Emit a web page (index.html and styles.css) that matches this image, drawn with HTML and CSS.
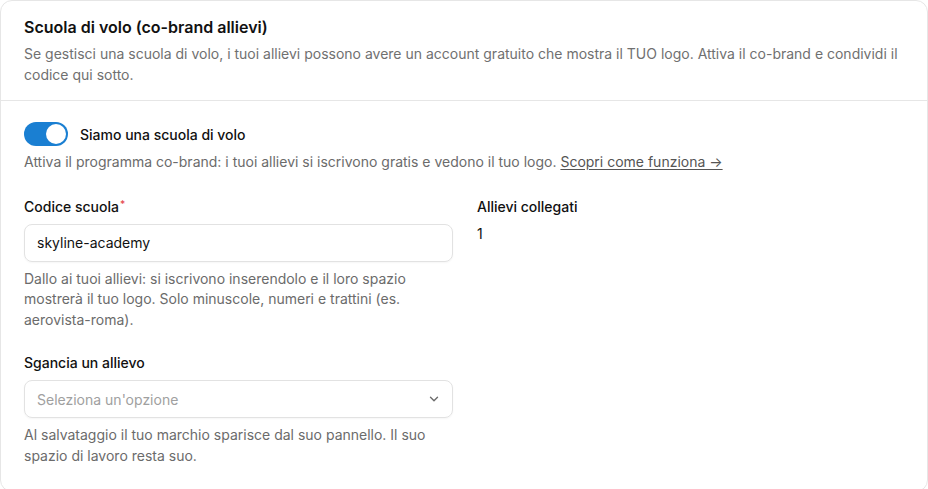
FILE: index.html
```html
<!DOCTYPE html>
<html lang="it">
<head>
<meta charset="utf-8">
<link rel="stylesheet" href="styles.css">
</head>
<body>
<section class="card">
  <header class="card-head">
    <h2 class="title">Scuola di volo (co-brand allievi)</h2>
    <p class="desc">Se gestisci una scuola di volo, i tuoi allievi possono avere un account gratuito che mostra il TUO logo. Attiva il co-brand e condividi il codice qui sotto.</p>
  </header>
  <div class="card-body">
    <div class="toggle-row">
      <span class="switch"><span class="knob"></span></span>
      <span class="toggle-label">Siamo una scuola di volo</span>
    </div>
    <p class="hint toggle-hint">Attiva il programma co-brand: i tuoi allievi si iscrivono gratis e vedono il tuo logo. <a class="link" href="#">Scopri come funziona →</a></p>

    <div class="grid">
      <div class="col">
        <div class="field">
          <label class="label">Codice scuola<span class="req">*</span></label>
          <div class="input">skyline-academy</div>
          <p class="hint">Dallo ai tuoi allievi: si iscrivono inserendolo e il loro spazio mostrerà il tuo logo. Solo minuscole, numeri e trattini (es. aerovista-roma).</p>
        </div>
        <div class="field field-2">
          <label class="label">Sgancia un allievo</label>
          <div class="input select">
            <span class="placeholder">Seleziona un'opzione</span>
            <svg class="chev" width="14" height="14" viewBox="0 0 16 16" fill="none"><path d="M4 6l4 4 4-4" stroke="#6b6b6b" stroke-width="1.6" stroke-linecap="round" stroke-linejoin="round"/></svg>
          </div>
          <p class="hint">Al salvataggio il tuo marchio sparisce dal suo pannello. Il suo spazio di lavoro resta suo.</p>
        </div>
      </div>
      <div class="col">
        <div class="label">Allievi collegati</div>
        <div class="value">1</div>
      </div>
    </div>
  </div>
</section>
</body>
</html>
```

FILE: styles.css
```css
* { box-sizing: border-box; }
html, body { margin: 0; padding: 0; background: #fff; }
body {
  font-family: Inter, "Noto Sans", sans-serif;
  color: #18181b;
  font-size: 14px;
}
.card {
  width: 928px;
  height: 492px;
  border: 1px solid #e6e6e6;
  border-radius: 12px;
  background: #fff;
}
.card-head {
  padding: 14px 23px 15px;
  border-bottom: 1px solid #e6e6e6;
}
.title {
  margin: 0;
  font-size: 16px;
  line-height: 24px;
  font-weight: 600;
  color: #111;
}
.desc {
  margin: 4px 0 0;
  font-size: 14px;
  line-height: 21px;
  color: #707070;
}
.card-body {
  padding: 21px 23px 20px;
}
.toggle-row {
  display: flex;
  align-items: center;
  gap: 12px;
  height: 24px;
}
.switch {
  width: 44px;
  height: 24px;
  border-radius: 12px;
  background: #1a7fd2;
  position: relative;
  flex: none;
}
.knob {
  position: absolute;
  right: 2px;
  top: 2px;
  width: 20px;
  height: 20px;
  border-radius: 50%;
  background: #fff;
}
.toggle-label {
  font-size: 14px;
  font-weight: 500;
  color: #111;
}
.hint {
  margin: 0;
  font-size: 14px;
  line-height: 20.5px;
  color: #6b6b6b;
}
.toggle-hint { margin-top: 6px; }
.link {
  color: #555;
  text-decoration: underline;
  text-underline-offset: 2px;
}
.grid {
  display: grid;
  grid-template-columns: 429px 1fr;
  column-gap: 24px;
  margin-top: 24px;
}
.field { display: flex; flex-direction: column; }
.field-2 { margin-top: 23px; }
.label {
  font-size: 14px;
  line-height: 20px;
  font-weight: 500;
  color: #111;
}
.req {
  color: #e5484d;
  font-size: 10px;
  vertical-align: top;
  margin-left: 1px;
  line-height: 14px;
}
.input {
  margin: 7px 0;
  height: 38px;
  border: 1px solid #e2e2e2;
  border-radius: 8px;
  padding: 0 12px;
  display: flex;
  align-items: center;
  font-size: 14px;
  color: #111;
  box-shadow: 0 1px 2px rgba(0,0,0,0.04);
}
.select { justify-content: space-between; }
.placeholder { color: #a0a0a0; }
.chev { margin-right: -1px; }
.value {
  margin-top: 7px;
  font-size: 14px;
  line-height: 20px;
  color: #111;
}
```
